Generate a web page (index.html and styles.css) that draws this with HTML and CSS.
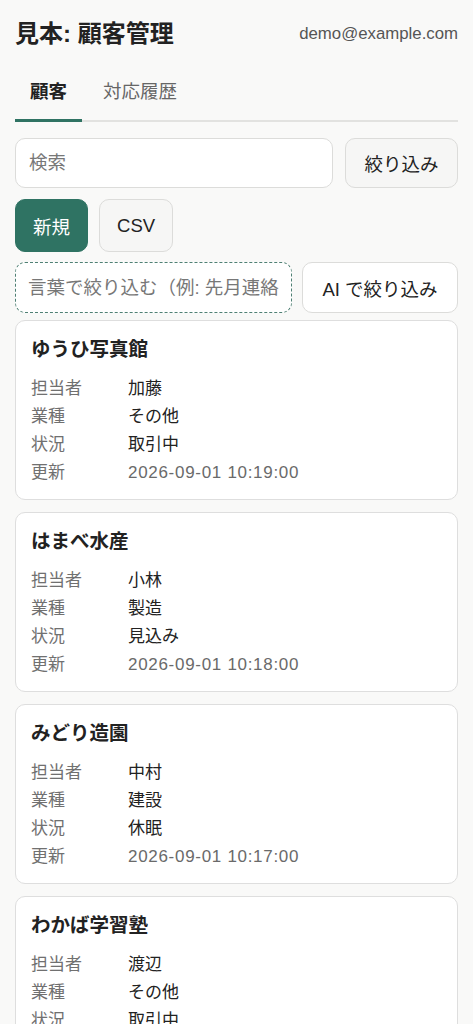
FILE: index.html
```html
<!DOCTYPE html>
<html lang="ja">
<head>
<meta charset="utf-8">
<title>見本: 顧客管理</title>
<link rel="stylesheet" href="styles.css">
</head>
<body>
<div class="page">
  <header class="header">
    <h1 class="title">見本: 顧客管理</h1>
    <span class="email">demo@example.com</span>
  </header>
  <nav class="tabs">
    <span class="tab active">顧客</span>
    <span class="tab">対応履歴</span>
  </nav>
  <div class="row row-search">
    <input class="input search" type="text" placeholder="検索">
    <button class="btn">絞り込み</button>
  </div>
  <div class="row row-actions">
    <button class="btn primary">新規</button>
    <button class="btn">CSV</button>
  </div>
  <div class="row row-ai">
    <input class="input ai" type="text" placeholder="言葉で絞り込む（例: 先月連絡した取引先）">
    <button class="btn">AI で絞り込み</button>
  </div>
  <div class="cards">
    <div class="card">
      <div class="card-title">ゆうひ写真館</div>
      <dl class="fields">
        <dt>担当者</dt><dd>加藤</dd>
        <dt>業種</dt><dd>その他</dd>
        <dt>状況</dt><dd>取引中</dd>
        <dt>更新</dt><dd class="muted">2026-09-01 10:19:00</dd>
      </dl>
    </div>
    <div class="card">
      <div class="card-title">はまべ水産</div>
      <dl class="fields">
        <dt>担当者</dt><dd>小林</dd>
        <dt>業種</dt><dd>製造</dd>
        <dt>状況</dt><dd>見込み</dd>
        <dt>更新</dt><dd class="muted">2026-09-01 10:18:00</dd>
      </dl>
    </div>
    <div class="card">
      <div class="card-title">みどり造園</div>
      <dl class="fields">
        <dt>担当者</dt><dd>中村</dd>
        <dt>業種</dt><dd>建設</dd>
        <dt>状況</dt><dd>休眠</dd>
        <dt>更新</dt><dd class="muted">2026-09-01 10:17:00</dd>
      </dl>
    </div>
    <div class="card">
      <div class="card-title">わかば学習塾</div>
      <dl class="fields">
        <dt>担当者</dt><dd>渡辺</dd>
        <dt>業種</dt><dd>その他</dd>
        <dt>状況</dt><dd>取引中</dd>
        <dt>更新</dt><dd class="muted">2026-09-01 10:16:00</dd>
      </dl>
    </div>
  </div>
</div>
</body>
</html>
```
FILE: styles.css
```css
* { box-sizing: border-box; }
html, body { margin: 0; padding: 0; }
body {
  background: #f9f9f8;
  color: #222;
  font-family: "Liberation Sans", "Noto Sans CJK JP", sans-serif;
}
.page { padding: 0 15px; }
.header {
  display: flex;
  align-items: center;
  justify-content: space-between;
  padding-top: 18px;
  height: 50px;
}
.title {
  margin: 0;
  font-size: 24px;
  line-height: 32px;
  font-weight: 700;
  color: #222;
}
.email {
  font-size: 16.8px;
  color: #555;
}
.tabs {
  display: flex;
  gap: 6px;
  margin-top: 18px;
  border-bottom: 2px solid #e2e2e0;
}
.tab {
  padding: 11px 15px 14px;
  font-size: 18.5px;
  line-height: 26px;
  color: #666;
  margin-bottom: -2px;
  border-bottom: 3px solid transparent;
}
.tab.active {
  color: #222;
  font-weight: 700;
  border-bottom-color: #2f7363;
}
.row { display: flex; }
.row-search { margin-top: 16px; gap: 12px; }
.row-actions { margin-top: 11px; gap: 11px; }
.row-ai { margin-top: 10px; gap: 10px; }
.input {
  height: 50px;
  border: 1px solid #dcdcda;
  border-radius: 10px;
  background: #fff;
  padding: 0 13px;
  font-family: inherit;
  font-size: 18.5px;
  color: #222;
  outline: none;
  min-width: 0;
}
.input::placeholder { color: #777; }
.search { flex: 1; }
.ai {
  flex: 1;
  height: 51px;
  border: 1.5px dashed #4f8074;
  padding: 0 12px;
}
.btn {
  height: 50px;
  border: 1px solid #dcdcda;
  border-radius: 10px;
  background: #f6f6f5;
  padding: 0 18.5px;
  font-family: inherit;
  font-size: 18.5px;
  color: #222;
}
.row-actions .btn { height: 53px; padding: 0 17px; }
.row-ai .btn { height: 51px; background: #fff; padding: 0 19.5px; }
.btn.primary {
  background: #2f7363;
  border-color: #2f7363;
  color: #fff;
}
.cards {
  display: flex;
  flex-direction: column;
  gap: 12px;
  margin-top: 7px;
}
.card {
  background: #fff;
  border: 1px solid #dedede;
  border-radius: 10px;
  padding: 15px 15px 12px;
}
.card-title {
  font-size: 19.5px;
  line-height: 26px;
  font-weight: 700;
  color: #222;
}
.fields {
  display: grid;
  grid-template-columns: 97px 1fr;
  margin: 13px 0 0;
  font-size: 17px;
  line-height: 28px;
}
.fields dt { color: #707070; }
.fields dd { margin: 0; color: #222; }
.fields dd.muted { color: #6a6a6a; letter-spacing: 0.7px; }
```
